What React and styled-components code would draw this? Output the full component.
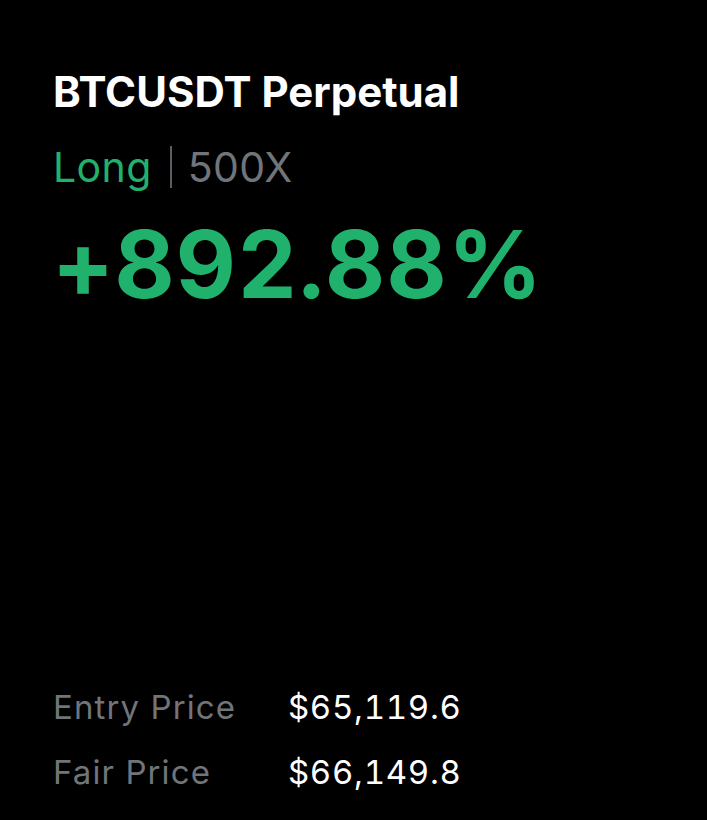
import React from "react";
import styled, { createGlobalStyle } from "styled-components";

const GlobalStyle = createGlobalStyle`
  html, body {
    margin: 0;
    padding: 0;
    background: #000;
  }
  body {
    font-family: Inter, "Noto Sans", "Liberation Sans", sans-serif;
    -webkit-font-smoothing: antialiased;
  }
`;

const Card = styled.div`
  width: 707px;
  height: 820px;
  box-sizing: border-box;
  background: #000;
  padding: 67px 53px 0;
  display: flex;
  flex-direction: column;
`;

const Title = styled.h1`
  margin: 0;
  font-size: 42px;
  line-height: 50px;
  font-weight: 700;
  color: #fff;
`;

const SideRow = styled.div`
  display: flex;
  align-items: center;
  margin-top: 26px;
  font-size: 41px;
  line-height: 48px;
  letter-spacing: 0.4px;
`;

const Side = styled.span`
  color: #20b26c;
`;

const Divider = styled.span`
  width: 2px;
  height: 42px;
  background: #5a5d63;
  margin: 0 16px 0 18px;
`;

const Leverage = styled.span`
  color: #71757a;
`;

const Roi = styled.div`
  margin-top: 23px;
  font-size: 93px;
  line-height: 100px;
  font-weight: 700;
  letter-spacing: 1.3px;
  color: #20b26c;
  font-variant-numeric: tabular-nums;
`;

const Details = styled.div`
  margin-top: auto;
  margin-bottom: 28px;
  display: grid;
  grid-template-columns: 235px auto;
  row-gap: 25px;
  font-size: 33px;
  line-height: 40px;
`;

const Label = styled.span`
  color: #71757a;
  letter-spacing: 1.1px;
`;

const Value = styled.span`
  color: #fff;
  letter-spacing: 0.7px;
  font-variant-numeric: tabular-nums;
`;

const rows = [
  ["Entry Price", "$65,119.6"],
  ["Fair Price", "$66,149.8"],
];

export default function App() {
  return (
    <>
      <GlobalStyle />
      <Card>
        <Title>BTCUSDT Perpetual</Title>
        <SideRow>
          <Side>Long</Side>
          <Divider />
          <Leverage>500X</Leverage>
        </SideRow>
        <Roi>+892.88%</Roi>
        <Details>
          {rows.map(([label, value]) => (
            <React.Fragment key={label}>
              <Label>{label}</Label>
              <Value>{value}</Value>
            </React.Fragment>
          ))}
        </Details>
      </Card>
    </>
  );
}
